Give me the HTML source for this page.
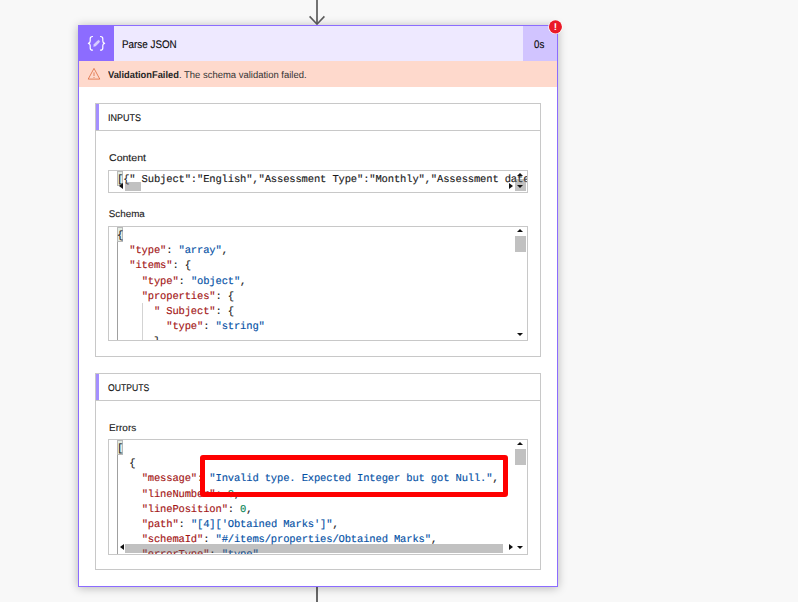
<!DOCTYPE html>
<html><head><meta charset="utf-8">
<style>
html,body{margin:0;padding:0;}
body{width:798px;height:602px;overflow:hidden;background:#f8f8f8;position:relative;font-family:"Liberation Sans",sans-serif;color:#333;text-rendering:geometricPrecision;}
.abs{position:absolute;}
.sx{display:inline-block;transform-origin:0 50%;white-space:nowrap;}
.card{position:absolute;left:78px;top:25px;width:478px;height:560px;border:1px solid #8c6cff;background:#fff;box-shadow:0 1px 9px rgba(0,0,0,.27);}
.hdr{position:absolute;left:0;top:0;width:478px;height:35px;background:#eee9ff;}
.ico{position:absolute;left:0;top:0;width:35px;height:35px;background:#8c6cff;}
.title{position:absolute;left:43.2px;top:1.7px;line-height:35px;font-size:11px;color:#0c0c0c;-webkit-text-stroke:0.15px currentColor;white-space:nowrap;transform-origin:0 50%;transform:scaleX(.895);}
.dur{position:absolute;right:0;top:0;width:34px;height:35px;background:#d1c4ff;}
.dur span{position:absolute;left:11.3px;top:1.7px;line-height:35px;font-size:11px;color:#0c0c0c;-webkit-text-stroke:0.15px currentColor;transform-origin:0 50%;transform:scaleX(.88);}
.ban{position:absolute;left:0;top:35px;width:478px;height:26px;background:#fed9cc;font-size:9.8px;line-height:26px;color:#333;}
.ban span.t{position:absolute;left:28.8px;top:2.1px;white-space:nowrap;}
.ban b{color:#262626}
.sec{position:absolute;left:16px;width:444px;border:1px solid #c8c8c8;background:#fff;}
.sech{position:absolute;left:0;top:0;width:444px;height:26px;border-bottom:1px solid #c8c8c8;}
.sech i{position:absolute;left:0;top:0;width:3px;height:26px;background:#a48fff;}
.sech span{position:absolute;left:12.2px;top:1.8px;line-height:26px;font-size:9.8px;color:#111;-webkit-text-stroke:0.12px currentColor;white-space:nowrap;transform-origin:0 50%;transform:scaleX(.918);}
.lbl{position:absolute;left:12.8px;font-size:9.8px;color:#1c1c1c;-webkit-text-stroke:0.12px currentColor;line-height:14px;white-space:nowrap;transform-origin:0 50%;}
.box{position:absolute;left:12px;width:418px;border:1px solid #c8c8c8;background:#fff;overflow:hidden;}
pre{margin:0;font-family:"Liberation Mono",monospace;font-size:10.5px;letter-spacing:-0.147px;line-height:15.2px;color:#1a1a1a;position:absolute;white-space:pre;-webkit-text-stroke:0.14px currentColor;}
.k{color:#a31515}.s{color:#0451a5}.n{color:#098658}
.g{position:absolute;width:1px;background:#d3d3d3;}
.bm{position:absolute;width:4px;height:13px;border:1px solid #b9b9b9;background:#e3ece3;box-sizing:content-box;}
.sb{position:absolute;background:rgba(100,100,100,.4);}
.ar{position:absolute;width:0;height:0;border:3.3px solid transparent;}
.au{border-bottom:3.6px solid #111;border-top:none;}
.ad{border-top:3.6px solid #111;border-bottom:none;}
.al{border-right:4px solid #111;border-left:none;}
.arr{border-left:4px solid #111;border-right:none;}
</style></head><body>
<!-- top arrow -->
<svg class="abs" style="left:305px;top:0" width="24" height="26"><path d="M12 0V24" stroke="#5c5c5c" stroke-width="1.7" fill="none"/><path d="M4.6 16.4L12 24.2L19.4 16.4" stroke="#5c5c5c" stroke-width="1.6" fill="none"/></svg>
<div class="abs" style="left:316.15px;top:587px;width:1.7px;height:15px;background:#686868"></div>

<div class="card">
  <div class="hdr">
    <div class="ico">
      <svg width="35" height="35" viewBox="0 0 35 35"><g fill="none" stroke="#fff" stroke-width="1.2" stroke-linecap="round" stroke-linejoin="round"><path d="M13.5 10.5c-1.8 0-2.3.8-2.3 2.2v2.3c0 1.4-.6 2-1.8 2.3 1.2.3 1.8.9 1.8 2.3v2.3c0 1.4.5 2.2 2.3 2.2"/><path d="M21.5 10.5c1.8 0 2.3.8 2.3 2.2v2.3c0 1.4.6 2 1.8 2.3-1.2.3-1.8.9-1.8 2.3v2.3c0 1.4-.5 2.2-2.3 2.2"/></g><path d="M14.6 20.4l.5-2.1 3.6-3.6a1.1 1.1 0 0 1 1.6 1.6l-3.6 3.6z" fill="#d6ccff" stroke="#f3efff" stroke-width=".35"/></svg>
    </div>
    <div class="title">Parse JSON</div>
    <div class="dur"><span>0s</span></div>
  </div>
  <div class="ban">
    <svg class="abs" style="left:8px;top:6px" width="14" height="14" viewBox="0 0 14 14"><path d="M7 1.4L12.8 12.1H1.2Z" fill="none" stroke="#dd6a3c" stroke-width=".8" stroke-linejoin="round"/><path d="M7 5.4V9" stroke="#dd6a3c" stroke-width=".8"/><circle cx="7" cy="10.5" r=".5" fill="#dd6a3c"/></svg>
    <span class="t"><b class="sx" style="transform:scaleX(.95);width:70.9px">ValidationFailed</b><span class="sx" style="transform:scaleX(.965)">. The schema validation failed.</span></span>
  </div>

  <!-- INPUTS -->
  <div class="sec" style="top:77px;height:252px;">
    <div class="sech"><i></i><span>INPUTS</span></div>
    <div class="lbl" style="top:47.8px;transform:scaleX(1.078)">Content</div>
    <div class="box" style="top:66px;height:21px;">
      <div class="bm" style="left:8px;top:0px;"></div>
      <pre style="left:8px;top:2px;">[{" Subject":"English","Assessment Type":"Monthly","Assessment date</pre>
      <div class="sb" style="left:16px;top:11px;width:16px;height:9px;"></div>
      <div class="ar al" style="left:9.6px;top:11.9px;"></div>
      <div class="sb" style="left:406.2px;top:8.2px;width:10.6px;height:11.5px;"></div>
      <div class="ar au" style="left:408px;top:2px;"></div>
      <div class="ar ad" style="left:408px;top:14px;"></div>
      <div class="ar arr" style="left:400px;top:11.5px;"></div>
    </div>
    <div class="lbl" style="top:103.8px;">Schema</div>
    <div class="box" style="top:122px;height:113px;">
      <div class="g" style="left:8px;top:14px;height:100px;background:#a0a0a0"></div>
      <div class="g" style="left:33px;top:76px;height:40px;"></div>
      <div class="bm" style="left:8px;top:0px;"></div>
      <pre style="left:8px;top:2px;">{
  <span class="k">"type"</span>: <span class="s">"array"</span>,
  <span class="k">"items"</span>: {
    <span class="k">"type"</span>: <span class="s">"object"</span>,
    <span class="k">"properties"</span>: {
      <span class="k">" Subject"</span>: {
        <span class="k">"type"</span>: <span class="s">"string"</span>
      },</pre>
      <div class="sb" style="left:406px;top:9px;width:10.5px;height:16px;"></div>
      <div class="ar au" style="left:408px;top:1.5px;"></div>
      <div class="ar ad" style="left:408px;top:105.5px;"></div>
    </div>
  </div>

  <!-- OUTPUTS -->
  <div class="sec" style="top:347px;height:195px;">
    <div class="sech"><i></i><span style="transform:scaleX(.88)">OUTPUTS</span></div>
    <div class="lbl" style="top:48px;transform:scaleX(1.02)">Errors</div>
    <div class="box" style="top:65px;height:114px;">
      <div class="g" style="left:8px;top:14px;height:100px;background:#a0a0a0"></div>
      <div class="bm" style="left:8px;top:0px;"></div>
      <pre style="left:8px;top:2px;">[
  {
    <span class="k">"message"</span>: <span class="s">"Invalid type. Expected Integer but got Null."</span>,
    <span class="k">"lineNumber"</span>: <span class="n">0</span>,
    <span class="k">"linePosition"</span>: <span class="n">0</span>,
    <span class="k">"path"</span>: <span class="s">"[4]['Obtained Marks']"</span>,
    <span class="k">"schemaId"</span>: <span class="s">"#/items/properties/Obtained Marks"</span>,
    <span class="k">"errorType"</span>: <span class="s">"type"</span>,</pre>
      <div class="sb" style="left:406px;top:9px;width:10.5px;height:16px;"></div>
      <div class="ar au" style="left:408px;top:1.5px;"></div>
      <div class="sb" style="left:16px;top:104px;width:378px;height:9px;"></div>
      <div class="ar al" style="left:11px;top:104px;"></div>
      <div class="ar arr" style="left:399.8px;top:104px;"></div>
      <div class="ar ad" style="left:408.3px;top:105.5px;"></div>
    </div>
  </div>
</div>

<!-- badge -->
<svg class="abs" style="left:546px;top:18px" width="20" height="20" viewBox="0 0 20 20"><circle cx="9.42" cy="8.85" r="7.2" fill="#fff"/><circle cx="9.42" cy="8.85" r="6.55" fill="#ea1a27"/><text x="9.5" y="12.3" text-anchor="middle" font-family="Liberation Sans, sans-serif" font-weight="bold" font-size="10" fill="#fff">!</text></svg>
<!-- red annotation -->
<div class="abs" style="left:200px;top:455px;width:298px;height:32px;border:5px solid #fe0000;border-radius:3px;"></div>
</body></html>
